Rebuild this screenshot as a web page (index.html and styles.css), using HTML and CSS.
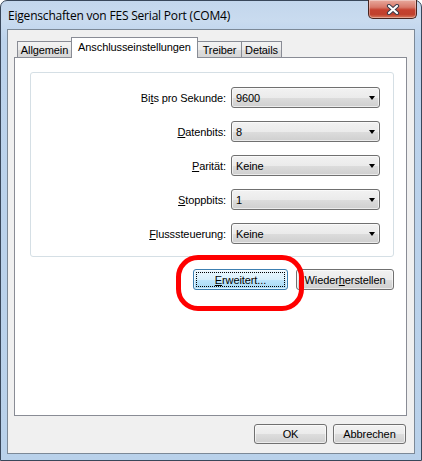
FILE: index.html
```html
<!DOCTYPE html>
<html lang="de">
<head>
<meta charset="utf-8">
<title>Eigenschaften von FES Serial Port (COM4)</title>
<link rel="stylesheet" href="styles.css">
</head>
<body>
<div class="window">
  <div class="titlebar">
    <span class="title">Eigenschaften von FES Serial Port (COM4)</span>
    <div class="close">
      <svg width="14" height="11" viewBox="0 0 14 11">
        <path d="M3 2 L11 9 M11 2 L3 9" stroke="#3b3b4a" stroke-width="4.2" stroke-linecap="round" fill="none"/>
        <path d="M3 2 L11 9 M11 2 L3 9" stroke="#ffffff" stroke-width="2.2" stroke-linecap="round" fill="none"/>
      </svg>
    </div>
  </div>
  <div class="client">
    <div class="tabs">
      <div class="tab t1">Allgemein</div>
      <div class="tab sel">Anschlusseinstellungen</div>
      <div class="tab t3">Treiber</div>
      <div class="tab t4">Details</div>
    </div>
    <div class="panel">
      <div class="group">
        <label class="lbl">Bi<u>t</u>s pro Sekunde:</label>
        <div class="combo"><span>9600</span><i class="arrow"></i></div>
        <label class="lbl"><u>D</u>atenbits:</label>
        <div class="combo"><span>8</span><i class="arrow"></i></div>
        <label class="lbl"><u>P</u>arität:</label>
        <div class="combo"><span>Keine</span><i class="arrow"></i></div>
        <label class="lbl"><u>S</u>toppbits:</label>
        <div class="combo"><span>1</span><i class="arrow"></i></div>
        <label class="lbl"><u>F</u>lusssteuerung:</label>
        <div class="combo"><span>Keine</span><i class="arrow"></i></div>
      </div>
      <div class="actions">
        <button class="btn default adv"><span class="focus"><u>E</u>rweitert...</span></button>
        <button class="btn restore">Wieder<u>h</u>erstellen</button>
      </div>
    </div>
    <div class="footer">
      <button class="btn ok">OK</button>
      <button class="btn cancel">Abbrechen</button>
    </div>
  </div>
  <div class="annotation"></div>
</div>
</body>
</html>
```
FILE: styles.css
```css
* { box-sizing: border-box; }
html, body { margin: 0; padding: 0; }
body { width: 422px; height: 461px; overflow: hidden; background: #fff; }

.window {
  position: relative;
  width: 422px;
  height: 461px;
  border: 1px solid #39475a;
  border-radius: 7px 7px 0 0;
  background: linear-gradient(180deg, #c3d6ec 0px, #c9dbef 20px, #bcd3ec 40px, #b9d1ea 100%);
  padding: 0 6px 6px 6px;
  display: flex;
  flex-direction: column;
  font-family: "Liberation Sans", Arial, sans-serif;
  font-size: 11px;
  letter-spacing: -0.1px;
  color: #000;
}

.titlebar {
  height: 28px;
  display: flex;
  align-items: flex-start;
  position: relative;
}
.title {
  font-family: "Open Sans", "Noto Sans", sans-serif;
  font-size: 12px;
  letter-spacing: -0.2px;
  margin-left: 1px;
  margin-top: 6px;
  color: #000;
}
.close {
  position: absolute;
  left: 361px;
  top: -1px;
  width: 49px;
  height: 19px;
  border: 1px solid #47241f;
  border-top: none;
  border-radius: 0 0 5px 5px;
  background: linear-gradient(180deg, #e8a99d 0%, #d8796a 40%, #c5412f 55%, #c0402c 80%, #d87a5e 100%);
  box-shadow: inset 0 0 0 1px rgba(255,255,255,0.35);
  display: flex;
  align-items: center;
  justify-content: center;
}

.client {
  flex: 1;
  border: 1px solid #7c8997;
  background: #f0f0f0;
  display: flex;
  flex-direction: column;
  padding: 7px 7px 9px 6px;
}

.tabs {
  display: flex;
  align-items: flex-end;
  height: 20px;
  padding-left: 3px;
}
.tab {
  height: 16px;
  border: 1px solid #898c95;
  border-bottom: none;
  background: linear-gradient(180deg, #f3f3f3 0%, #ebebeb 50%, #dedede 51%, #d6d6d6 100%);
  display: flex;
  align-items: center;
  justify-content: center;
  padding-top: 1px;
  white-space: nowrap;
}
.t1 { width: 55px; margin-right: -1px; }
.sel {
  width: 127px;
  height: 21px;
  margin-bottom: -1px;
  background: #fff;
  position: relative;
  z-index: 1;
  align-items: flex-start;
  padding-top: 3px;
}
.t3 { width: 45px; margin-left: -1px; }
.t4 { width: 41px; margin-left: -1px; }

.panel {
  width: 393px;
  height: 359px;
  border: 1px solid #898c95;
  background: #fff;
  padding: 14px 12px 0 15px;
}

.group {
  height: 185px;
  border: 1px solid #d5dfe5;
  border-radius: 3px;
  display: grid;
  grid-template-columns: 1fr 149px;
  grid-auto-rows: 21px;
  column-gap: 5px;
  row-gap: 13px;
  padding: 14px 13px 0 0;
  align-content: start;
}
.lbl {
  display: flex;
  align-items: center;
  justify-content: flex-end;
  white-space: nowrap;
  padding-top: 1px;
}
.combo {
  border: 1px solid #707070;
  border-radius: 3px;
  background: linear-gradient(180deg, #f2f2f2 0%, #ebebeb 50%, #dddddd 51%, #cfcfcf 100%);
  box-shadow: inset 0 0 0 1px rgba(255,255,255,0.6);
  display: flex;
  align-items: center;
  padding: 1px 4px 0 4px;
}
.arrow {
  margin-left: auto;
  width: 0;
  height: 0;
  border-left: 3.5px solid transparent;
  border-right: 3.5px solid transparent;
  border-top: 4px solid #000;
}

.actions {
  display: flex;
  justify-content: flex-end;
  gap: 8px;
  margin-top: 12px;
}
.btn {
  font-family: "Liberation Sans", Arial, sans-serif;
  font-size: 11px;
  letter-spacing: -0.1px;
  color: #000;
  height: 21px;
  padding: 0;
  border: 1px solid #707070;
  border-radius: 3px;
  background: linear-gradient(180deg, #f2f2f2 0%, #ebebeb 50%, #dddddd 51%, #cfcfcf 100%);
  box-shadow: inset 0 0 0 1px rgba(255,255,255,0.6);
  display: flex;
  align-items: center;
  justify-content: center;
}
.adv { width: 95px; }
.restore { width: 98px; }
.default {
  border-color: #3c7fb1;
  background: linear-gradient(180deg, #eaf6fd 0%, #d9f0fc 50%, #bee6fd 51%, #a7d9f5 100%);
  padding: 2px;
}
.focus {
  flex: 1;
  align-self: stretch;
  border: 1px dotted #000;
  display: flex;
  align-items: center;
  justify-content: center;
}

.footer {
  display: flex;
  justify-content: flex-end;
  gap: 6px;
  margin-top: 8px;
  padding-right: 1px;
}
.ok, .cancel { width: 73px; height: 20px; }

.annotation {
  position: absolute;
  left: 175px;
  top: 254px;
  width: 128px;
  height: 56px;
  border: 5px solid #ff0000;
  border-radius: 22px;
}
```
